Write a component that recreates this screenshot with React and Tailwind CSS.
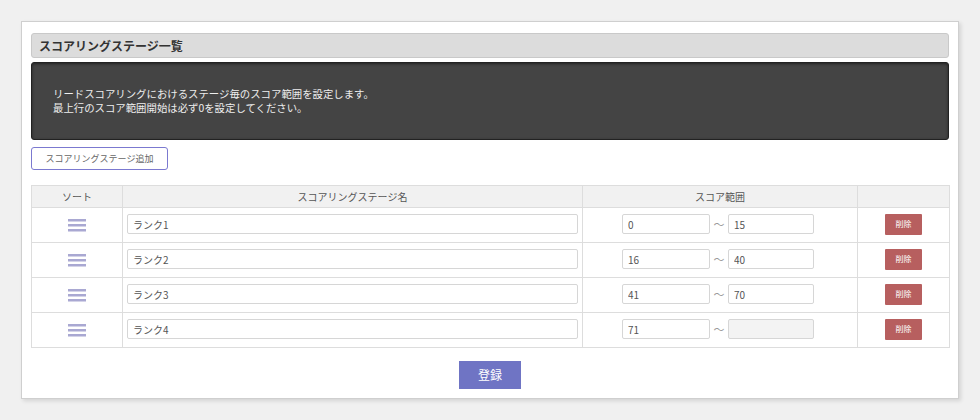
import { useState } from "react";

const initialStages = [
  { name: "ランク1", from: "0", to: "15" },
  { name: "ランク2", from: "16", to: "40" },
  { name: "ランク3", from: "41", to: "70" },
  { name: "ランク4", from: "71", to: "" },
];

function SortHandle() {
  return (
    <svg width="18" height="14" viewBox="0 0 18 14" className="mx-auto">
      <rect x="0" y="1" width="18" height="2.5" fill="#a9a8d2" />
      <rect x="0" y="6" width="18" height="2.5" fill="#a9a8d2" />
      <rect x="0" y="11" width="18" height="2.5" fill="#a9a8d2" />
    </svg>
  );
}

export default function App() {
  const [stages, setStages] = useState(initialStages);

  const update = (i, key, value) => {
    setStages(stages.map((s, idx) => (idx === i ? { ...s, [key]: value } : s)));
  };

  return (
    <div
      className="w-[980px] h-[420px] bg-[#f0f0f0] pt-[21px] pl-[21px]"
      style={{ fontFamily: '"Noto Sans CJK JP", "Noto Sans", sans-serif' }}
    >
      <div className="w-[938px] h-[378px] bg-white border border-[#cfcfcf] shadow-[2px_2px_4px_rgba(0,0,0,0.12)] px-[9px] pt-[11px]">

        <div className="h-[25px] bg-[#dcdcdc] border border-[#c9c9c9] rounded-[3px] flex items-center pl-[7px]">
          <h2 className="text-[12px] font-bold text-[#333] leading-none">
            スコアリングステージ一覧
          </h2>
        </div>

        <div className="mt-[4px] h-[78px] bg-[#444] border border-[#222] rounded-[3px] shadow-[inset_0_1px_3px_rgba(0,0,0,0.5)] pl-[21px] pt-[24px] text-[10.4px] leading-[14px] text-[#eee]">
          <p>リードスコアリングにおけるステージ毎のスコア範囲を設定します。</p>
          <p>最上行のスコア範囲開始は必ず0を設定してください。</p>
        </div>

        <button className="mt-[7px] w-[137px] h-[23px] border-[1.5px] border-[#7b79d0] rounded-[3px] text-[9px] text-[#666] bg-white">
          スコアリングステージ追加
        </button>

        <table className="mt-[15px] w-[919px] border-collapse text-[10px] text-[#555]">
          <thead>
            <tr className="bg-[#f1f1f1] h-[22px]">
              <th className="w-[91px] border border-[#ddd] font-normal">ソート</th>
              <th className="w-[460px] border border-[#ddd] font-normal">スコアリングステージ名</th>
              <th className="w-[275px] border border-[#ddd] font-normal">スコア範囲</th>
              <th className="border border-[#ddd] font-normal"></th>
            </tr>
          </thead>
          <tbody>
            {stages.map((s, i) => (
              <tr key={i} className="h-[35px]">
                <td className="border border-[#ddd] text-center">
                  <SortHandle />
                </td>
                <td className="border border-[#ddd] px-[4px] pb-[2px]">
                  <input
                    value={s.name}
                    onChange={(e) => update(i, "name", e.target.value)}
                    className="w-full h-[20px] border border-[#d6d6d6] rounded-[2px] px-[5px] text-[10px] text-[#555] bg-white"
                  />
                </td>
                <td className="border border-[#ddd] pb-[2px]">
                  <div className="flex items-center justify-center gap-[3px] pr-[4px]">
                    <input
                      value={s.from}
                      onChange={(e) => update(i, "from", e.target.value)}
                      className="w-[88px] h-[20px] border border-[#d6d6d6] rounded-[2px] px-[5px] text-[10px] text-[#555] bg-white"
                    />
                    <span className="text-[#999] text-[11px] w-[12px] text-center">～</span>
                    <input
                      value={s.to}
                      disabled={s.to === ""}
                      onChange={(e) => update(i, "to", e.target.value)}
                      className={
                        s.to === ""
                          ? "w-[86px] h-[20px] border border-[#d6d6d6] rounded-[2px] px-[5px] text-[10px] bg-[#f3f3f3]"
                          : "w-[86px] h-[20px] border border-[#d6d6d6] rounded-[2px] px-[5px] text-[10px] text-[#555] bg-white"
                      }
                    />
                  </div>
                </td>
                <td className="border border-[#ddd] text-center pb-[2px]">
                  <button className="w-[37px] h-[21px] bg-[#b75f5f] text-white text-[8px] rounded-[1px]">
                    削除
                  </button>
                </td>
              </tr>
            ))}
          </tbody>
        </table>

        <div className="flex justify-center mt-[13px]">
          <button className="w-[62px] h-[28px] bg-[#6f74c4] text-white text-[12px]">
            登録
          </button>
        </div>

      </div>
    </div>
  );
}
